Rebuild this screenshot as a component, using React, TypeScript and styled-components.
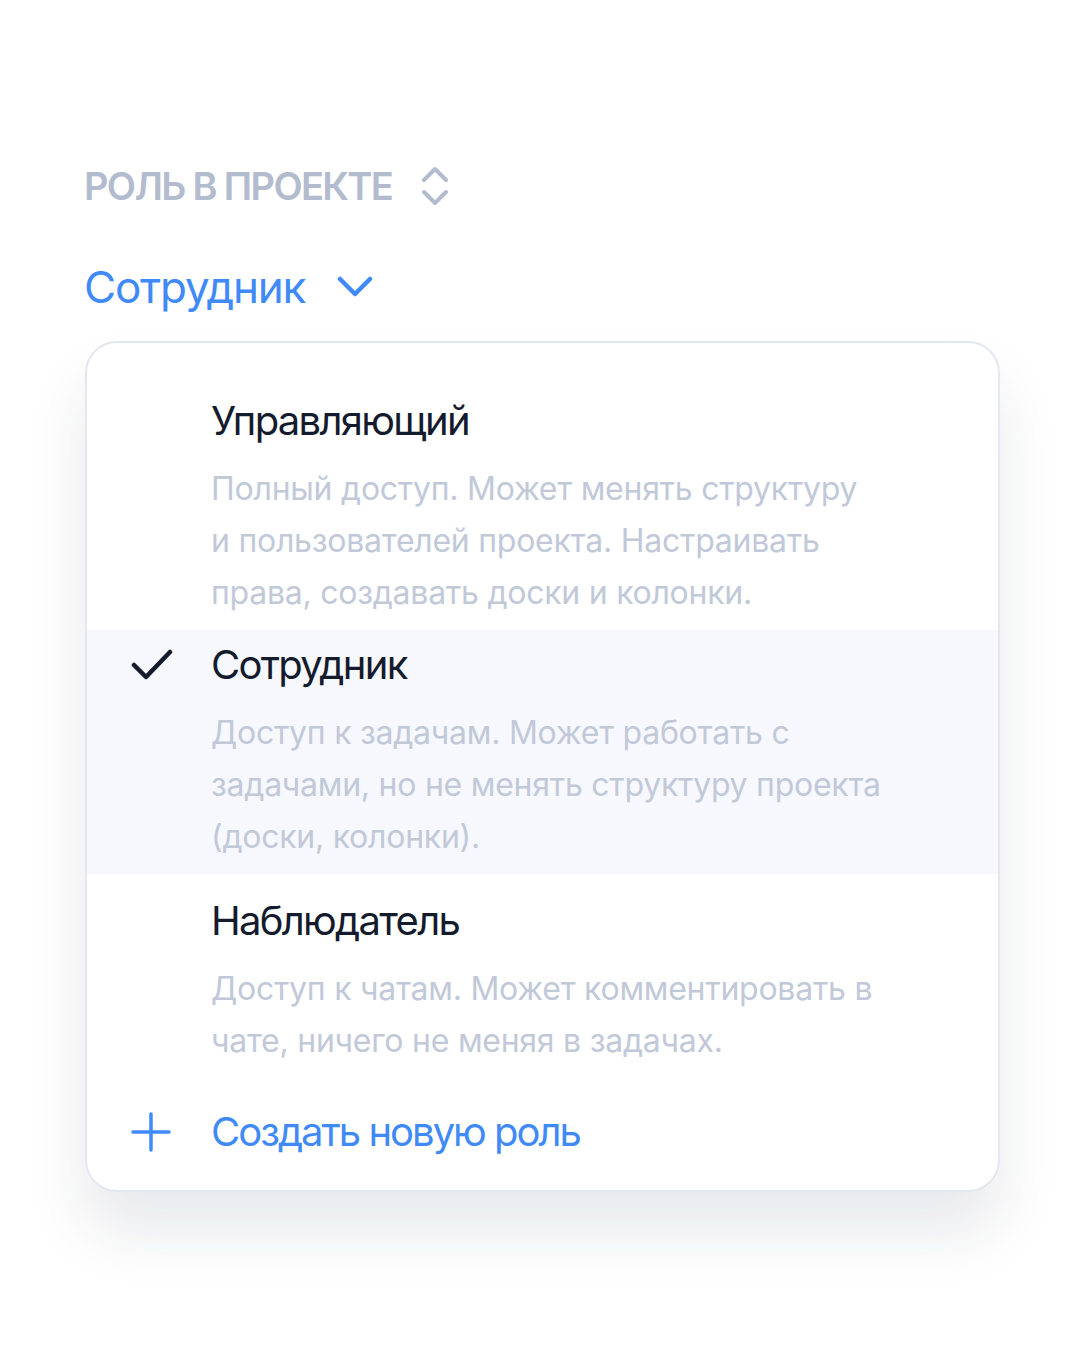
import React, { useState } from "react";
import styled, { createGlobalStyle } from "styled-components";

type Role = {
  id: string;
  title: string;
  lines: string[];
};

const roles: Role[] = [
  {
    id: "manager",
    title: "Управляющий",
    lines: [
      "Полный доступ. Может менять структуру",
      "и пользователей проекта. Настраивать",
      "права, создавать доски и колонки."
    ]
  },
  {
    id: "employee",
    title: "Сотрудник",
    lines: [
      "Доступ к задачам. Может работать с",
      "задачами, но не менять структуру проекта",
      "(доски, колонки)."
    ]
  },
  {
    id: "observer",
    title: "Наблюдатель",
    lines: [
      "Доступ к чатам. Может комментировать в",
      "чате, ничего не меняя в задачах."
    ]
  }
];

const GlobalStyle = createGlobalStyle`
  body {
    margin: 0;
    background: #ffffff;
    font-family: Inter, "Noto Sans", sans-serif;
    -webkit-font-smoothing: antialiased;
  }
`;

const Page = styled.div`
  padding: 163px 84px 150px 84px;
`;

const Label = styled.div`
  display: flex;
  align-items: center;
  gap: 30px;
  font-size: 38px;
  line-height: 46px;
  font-weight: 600;
  color: #b3bbcf;
  letter-spacing: -1.65px;
`;

const Current = styled.button`
  display: flex;
  align-items: center;
  gap: 32px;
  margin-top: 52px;
  padding: 0;
  border: none;
  background: none;
  font-family: inherit;
  font-size: 44px;
  line-height: 52px;
  letter-spacing: -1.2px;
  color: #3f8af7;
  cursor: pointer;
`;

const Card = styled.div`
  margin: 28px 0 0 1px;
  width: 915px;
  box-sizing: border-box;
  border: 2px solid #e4e7f0;
  border-radius: 32px;
  background: #ffffff;
  padding: 31px 0 34px;
  box-shadow: 0 40px 60px rgba(30, 40, 70, 0.1);
  overflow: hidden;
`;

const Option = styled.div<{ $selected: boolean }>`
  display: grid;
  grid-template-columns: 124px 1fr;
  padding: ${p => (p.$selected ? "11px" : "23px")} 0 11px;
  background: ${p => (p.$selected ? "#f6f8fd" : "transparent")};
  cursor: pointer;
`;

const Mark = styled.div`
  height: 48px;
  display: flex;
  align-items: center;
  padding-left: 44px;
`;

const Title = styled.div`
  font-size: 40px;
  line-height: 48px;
  letter-spacing: -1.7px;
  color: #141b2d;
`;

const Desc = styled.div`
  margin-top: 18px;
  font-size: 32px;
  line-height: 52px;
  letter-spacing: -0.25px;
  color: #c1c9d9;
  white-space: nowrap;
`;

const CreateRow = styled.div`
  display: grid;
  grid-template-columns: 124px 1fr;
  padding-top: 30px;
  font-size: 40px;
  line-height: 48px;
  letter-spacing: -2px;
  color: #3f8af7;
  cursor: pointer;
`;

const SortIcon = () => (
  <svg width="26" height="42" viewBox="0 0 26 42" fill="none">
    <path
      d="M2 15 L13 4 L24 15 M2 27 L13 38 L24 27"
      stroke="#b3bbcf"
      strokeWidth="4"
      strokeLinecap="round"
      strokeLinejoin="round"
    />
  </svg>
);

const ChevronDown = () => (
  <svg width="36" height="22" viewBox="0 0 36 22" fill="none">
    <path
      d="M3 3 L18 18 L33 3"
      stroke="#3f8af7"
      strokeWidth="4.5"
      strokeLinecap="round"
      strokeLinejoin="round"
    />
  </svg>
);

const Check = () => (
  <svg width="42" height="34" viewBox="0 0 42 34" fill="none">
    <path
      d="M3 17 L15 29 L39 4"
      stroke="#141b2d"
      strokeWidth="4.5"
      strokeLinecap="round"
      strokeLinejoin="round"
    />
  </svg>
);

const Plus = () => (
  <svg width="40" height="40" viewBox="0 0 40 40" fill="none">
    <path
      d="M20 2 V38 M2 20 H38"
      stroke="#3f8af7"
      strokeWidth="3.5"
      strokeLinecap="round"
    />
  </svg>
);

export default function App() {
  const [selected, setSelected] = useState("employee");
  const current = roles.find(r => r.id === selected);

  return (
    <Page>
      <GlobalStyle />
      <Label>
        РОЛЬ В ПРОЕКТЕ
        <SortIcon />
      </Label>
      <Current>
        {current && current.title}
        <ChevronDown />
      </Current>
      <Card>
        {roles.map(role => (
          <Option
            key={role.id}
            $selected={role.id === selected}
            onClick={() => setSelected(role.id)}
          >
            <Mark>{role.id === selected && <Check />}</Mark>
            <div>
              <Title>{role.title}</Title>
              <Desc>
                {role.lines.map((line, i) => (
                  <div key={i}>{line}</div>
                ))}
              </Desc>
            </div>
          </Option>
        ))}
        <CreateRow>
          <Mark>
            <Plus />
          </Mark>
          <span>Создать новую роль</span>
        </CreateRow>
      </Card>
    </Page>
  );
}
